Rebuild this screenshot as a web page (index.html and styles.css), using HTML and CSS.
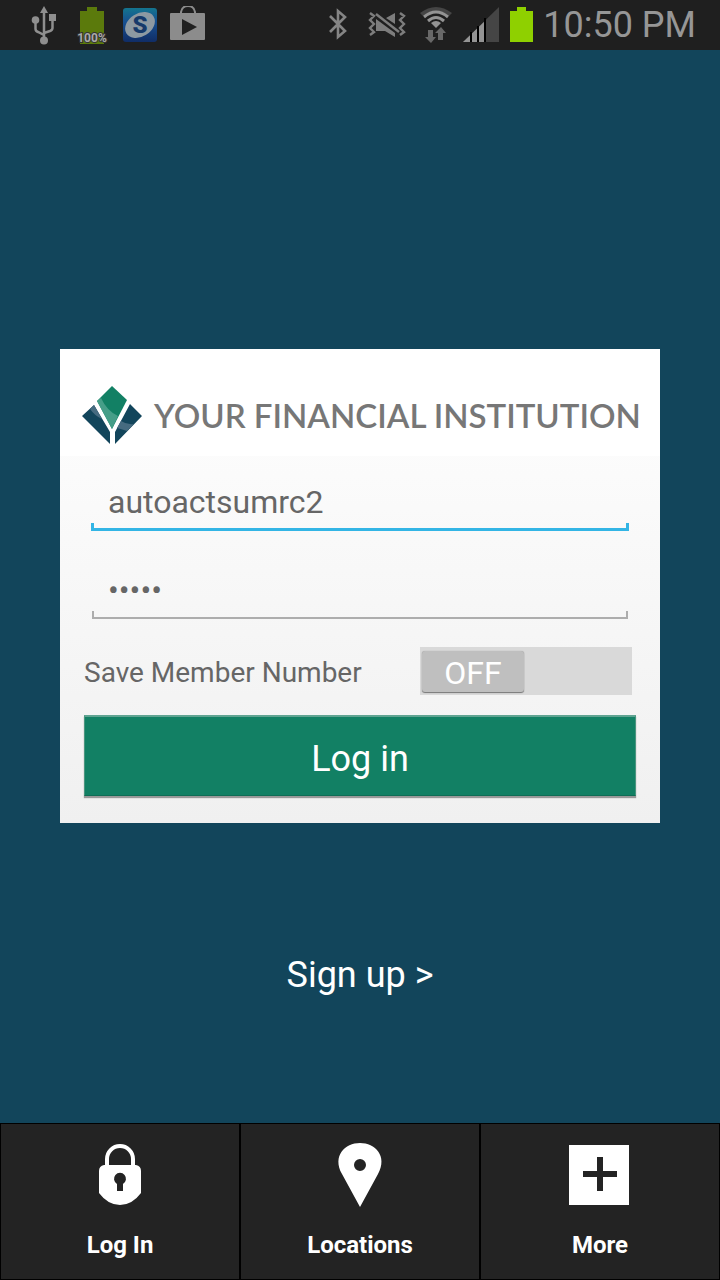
FILE: index.html
```html
<!DOCTYPE html>
<html lang="en">
<head>
<meta charset="utf-8">
<meta name="viewport" content="width=device-width, initial-scale=1">
<title>Your Financial Institution</title>
<link rel="stylesheet" href="styles.css">
</head>
<body>
<header class="status">
  <div class="status-left">
    <svg width="26" height="40" viewBox="0 0 26 40" aria-hidden="true">
      <g fill="none" stroke="#8f8f8f" stroke-width="2.5"><path d="M13 5V34M4.500 15V24Q4.500 26 7 27L13 30M21.500 13V23Q21.500 25 19 26L13 28"/></g>
      <g fill="#8f8f8f"><path d="M13 1L17 8H9Z"/><circle cx="4.500" cy="15" r="3.800"/><path d="M18 9h7v7h-7z"/><circle cx="13" cy="35.500" r="4"/></g>
    </svg>
    <svg class="charge" width="34" height="40" viewBox="0 0 34 40" aria-hidden="true">
      <path fill="#5b7a0c" d="M12 2h10v4h7v33H5V6h7z"/>
      <text x="17" y="36.500" text-anchor="middle">100%</text>
    </svg>
    <svg class="sapp" width="36" height="36" viewBox="0 0 36 36" aria-hidden="true">
      <defs><linearGradient id="blue" x1="0" y1="0" x2="0" y2="1"><stop offset="0" stop-color="#14758f"/><stop offset=".4" stop-color="#175091"/><stop offset="1" stop-color="#102d66"/></linearGradient></defs>
      <rect x="2" y="1" width="34" height="34" rx="3" fill="url(#blue)"/>
      <ellipse cx="19" cy="18" rx="16" ry="11.500" fill="#8d99a2" transform="rotate(-32 19 18)"/>
      <text x="19" y="26" text-anchor="middle">S</text>
    </svg>
    <svg width="36" height="38" viewBox="0 0 36 38" aria-hidden="true">
      <path fill="none" stroke="#8c8c8c" stroke-width="2" d="M12 8V6Q13 0 19 0T26 6V8"/>
      <rect x="1" y="7" width="35" height="27" rx="1" fill="#8c8c8c"/>
      <path fill="#202020" d="M13 13L28 21L13 29Z"/>
    </svg>
  </div>
  <div class="status-right">
    <svg width="18" height="32" viewBox="0 0 18 32" aria-hidden="true"><path fill="none" stroke="#858585" stroke-width="2.600" d="M1 8L16 23L9 29V3L16 9L1 24"/></svg>
    <svg class="mute" width="38" height="30" viewBox="0 0 38 30" aria-hidden="true">
      <path fill="none" stroke="#7d7d7d" stroke-width="2.400" d="M2 4l4 3-4 4 4 4-4 4 4 4-4 3M32 4l4 3-4 4 4 4-4 4 4 4-4 3"/>
      <path fill="#7d7d7d" d="M8 10L27 24V28L17 22H8ZM18 9L27 4V15Z"/>
      <path stroke="#7d7d7d" stroke-width="2.400" d="M8 5L31 23"/>
    </svg>
    <svg class="wifi" width="34" height="38" viewBox="0 0 34 38" aria-hidden="true">
      <path fill="#454545" d="M1 8Q17-4 33 8L30 11Q17 1 4 11Z"/>
      <g fill="none" stroke="#949494" stroke-width="3"><path d="M5 12Q17 2 29 12M9 16Q17 9 25 16"/></g>
      <path fill="#949494" d="M12 18Q17 14 22 18L17 23Z"/>
      <path fill="#686868" d="M9 25h5v7h3l-5 6-6-6h3zM19 35h5v-7h3l-5-6-6 6h3z"/>
    </svg>
    <svg width="36" height="36" viewBox="0 0 36 36" aria-hidden="true">
      <path fill="#454545" d="M36 1V36H0Z"/><path fill="#949494" d="M22 15V36H0Z"/>
      <path stroke="#000" stroke-width="2" d="M8 26V36M15 20V36M22 12V36"/>
    </svg>
    <svg class="battery" width="24" height="36" viewBox="0 0 24 36" aria-hidden="true"><path fill="#8fd000" d="M7 1h9v4h7v31H0V5h7z"/></svg>
    <time class="clock">10:50 PM</time>
  </div>
</header>

<main class="main">
  <section class="card">
    <h1 class="brand">
      <svg width="60" height="58" viewBox="0 0 60 58" aria-hidden="true">
        <path fill="#128064" d="M30 0L45 14L30 43L15 15Z"/>
        <path fill="#469e88" d="M15 15L19 12Q25 25 36 30L30 43Z"/>
        <path fill="#12455b" d="M12 19L28 46V58L0 30ZM48 18L60 30L33 58V46Z"/>
        <path fill="#466b80" d="M12 19L20 33Q13 30 8 23ZM39 35Q45 39 52 38L45 45Q39 43 35 42Z"/>
      </svg>
      <span>YOUR FINANCIAL INSTITUTION</span>
    </h1>
    <form class="form">
      <input class="field field-active" type="text" value="autoactsumrc2" aria-label="Member number">
      <input class="field" type="password" value="12345" aria-label="Password">
      <div class="save">
        <label for="save">Save Member Number</label>
        <div class="switch">
          <input id="save" type="checkbox" role="switch">
          <span class="thumb">OFF</span>
        </div>
      </div>
      <button class="login" type="button">Log in</button>
    </form>
  </section>
  <a class="signup" href="#signup">Sign up &gt;</a>
</main>

<nav class="tabs">
  <a class="tab" href="#login">
    <svg width="64" height="64" viewBox="0 0 64 64" aria-hidden="true">
      <path fill="none" stroke="#fff" stroke-width="4" d="M19 24V16A13 13 0 0 1 45 16V24"/>
      <path fill="#fff" fill-rule="evenodd" d="M16 22H48Q53 23 53 28V50Q44 62 32 62T11 50V28Q11 23 16 22ZM29 41V48H35V41A6 6 0 1 0 29 41Z"/>
    </svg>
    <span>Log In</span>
  </a>
  <a class="tab" href="#locations">
    <svg width="64" height="64" viewBox="0 0 64 64" aria-hidden="true"><path fill="#fff" fill-rule="evenodd" d="M32 64L14 31C4 13 17 0 32 0S60 13 50 31ZM32 16A6 6 0 1 0 32 28A6 6 0 1 0 32 16"/></svg>
    <span>Locations</span>
  </a>
  <a class="tab" href="#more">
    <svg width="64" height="64" viewBox="0 0 64 64" aria-hidden="true"><path fill="#fff" d="M1 2h60v60H1z"/><path fill="#232323" d="M29 14h6v14h14v6H35v14h-6V34H15v-6h14z"/></svg>
    <span>More</span>
  </a>
</nav>
</body>
</html>
```
FILE: styles.css
```css
* { box-sizing: border-box; }
body {
  margin: 0;
  min-height: 100vh;
  display: flex;
  flex-direction: column;
  background: #12455b;
  font-family: Roboto, "Liberation Sans", sans-serif;
}
svg { display: block; flex: none; }
a { color: inherit; text-decoration: none; }

.status {
  display: flex;
  justify-content: space-between;
  align-items: center;
  height: 50px;
  padding: 0 24px 0 31px;
  background: #1f1f1f;
}
.status-left, .status-right { display: flex; align-items: center; }
.status-left { gap: 12px; }
.status-left .charge { margin-left: 6px; }
.charge text { font-size: 12px; font-weight: 700; fill: #aaa; stroke: #333; stroke-width: 2px; paint-order: stroke; }
.sapp text { font-size: 24px; font-weight: 900; fill: #163a6b; }
.status-right svg { margin-bottom: 2px; }
.status-right .mute { margin-left: 21px; }
.status-right .wifi { margin-left: 13px; margin-right: 10px; }
.status-right .battery { margin-left: 11px; }
.clock { margin-left: 9px; font-size: 36px; line-height: 48px; color: #969696; white-space: nowrap; }

.main {
  flex: 1;
  display: grid;
  grid-template-columns: minmax(0, 1fr);
  grid-template-rows: 1fr auto 1fr;
  padding: 0 60px 2px;
}
.card {
  grid-row: 2;
  background: linear-gradient(#fff, #f0f0f0);
}
.brand {
  display: flex;
  align-items: center;
  gap: 12px;
  margin: 0;
  padding: 37px 20px 12px 22px;
  background: #fff;
  font-family: Lato, sans-serif;
  font-size: 33px;
  font-weight: 600;
  line-height: 58px;
  color: #777;
  white-space: nowrap;
}
.form { display: flex; flex-direction: column; padding: 11px 24px 26px; }
.field {
  --line: #adadad;
  --w: 2px;
  height: 64px;
  margin: 0 8px 24px;
  padding: 6px 16px 0;
  border: 0;
  border-radius: 0;
  outline: 0;
  background:
    linear-gradient(var(--line), var(--line)) left bottom / var(--w) 8px no-repeat,
    linear-gradient(var(--line), var(--line)) right bottom / var(--w) 8px no-repeat,
    linear-gradient(var(--line), var(--line)) left bottom / 100% var(--w) no-repeat;
  font: 32px Roboto, sans-serif;
  color: #666;
}
.field-active { --line: #33b5e5; --w: 3px; margin: 0 7px 24px; padding-left: 17px; }
.save {
  display: flex;
  align-items: center;
  justify-content: space-between;
  margin: 4px 4px 20px 0;
  font-size: 28px;
  color: #666;
}
.save label { padding-top: 4px; }
.switch {
  position: relative;
  width: 212px;
  height: 48px;
  padding: 4px 2px;
  background: #d9d9d9;
}
.switch input { position: absolute; inset: 0; width: 100%; height: 100%; margin: 0; opacity: 0; }
.thumb {
  display: block;
  width: 102px;
  height: 41px;
  border-radius: 3px;
  background: #bfbfbf;
  box-shadow: 0 1px 1px #777, 0 0 1px #999;
  font-size: 32px;
  line-height: 44px;
  text-align: center;
  color: #fff;
}
.login {
  height: 81px;
  margin-bottom: 1px;
  padding: 6px 0 0;
  border: solid #128064;
  border-width: 2px 1px 1px;
  border-color: #5fa391 #4a957f #0f6d55;
  background: #128064;
  box-shadow: 0 2px 1px #999;
  font: 36px Roboto, sans-serif;
  color: #fff;
}
.signup { grid-row: 3; place-self: center; padding-top: 6px; font-size: 36px; line-height: 48px; color: #fff; }

.tabs { display: grid; grid-template-columns: repeat(3, 1fr); background: #000; }
.tab {
  display: flex;
  flex-direction: column;
  align-items: center;
  gap: 23px;
  padding: 19px 0 18px;
  border: 1px solid #000;
  background: #232323;
  font-size: 24px;
  font-weight: 700;
  line-height: 31px;
  color: #fff;
}
```
